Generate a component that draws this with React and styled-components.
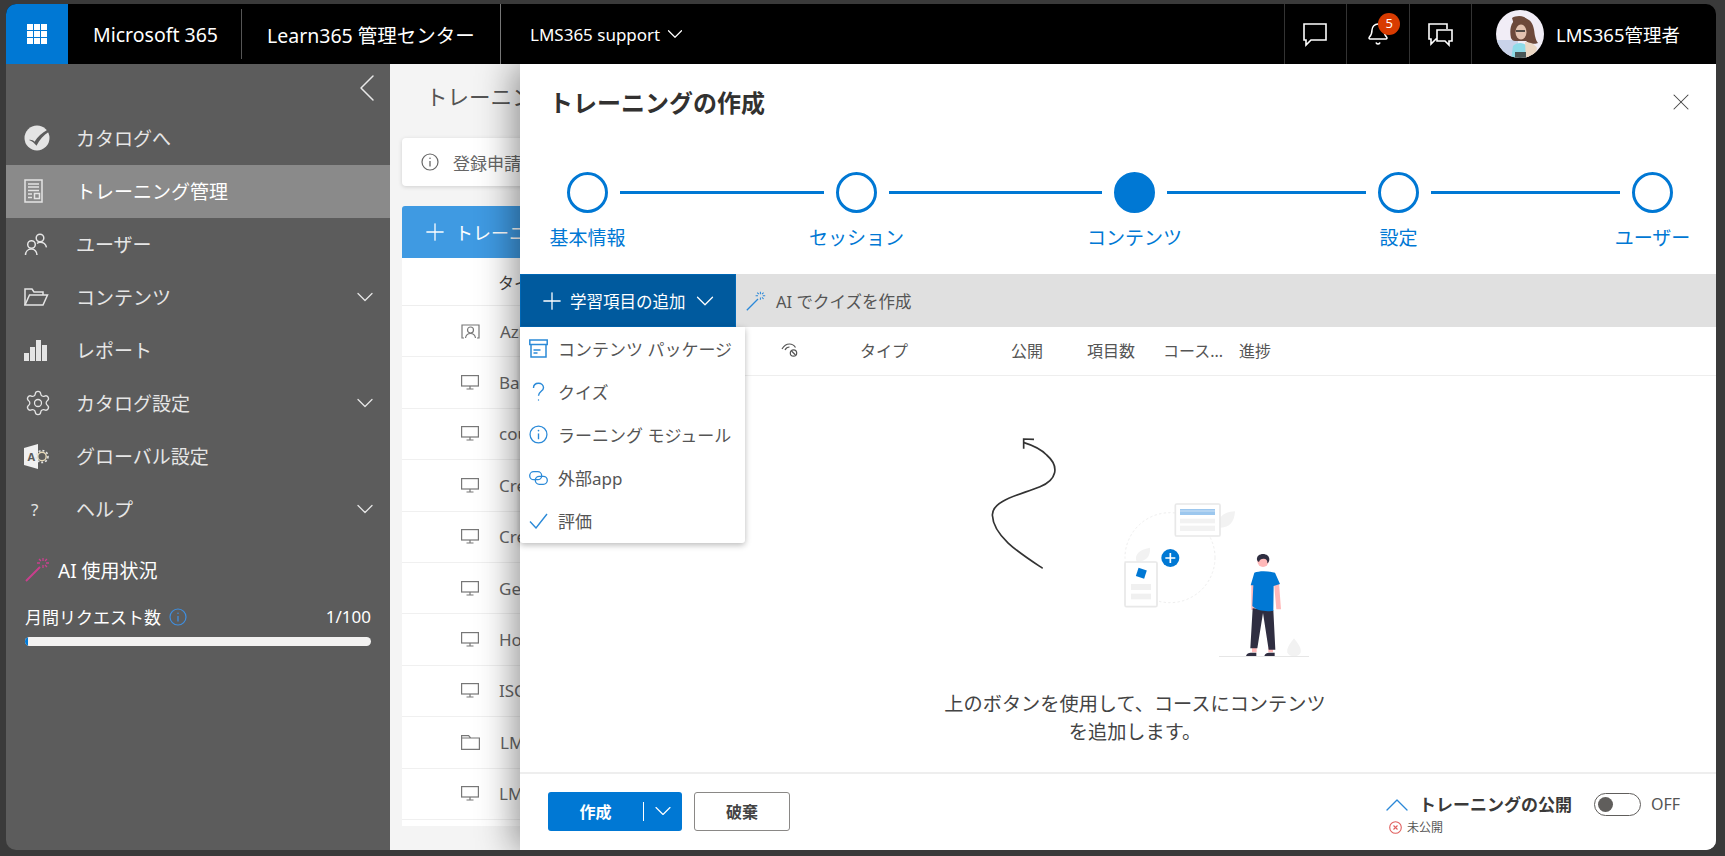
import React from 'react';
import styled, { createGlobalStyle } from 'styled-components';
import { ChevronDown, ChevronLeft, ChevronUp, Settings, Plus, X, Bell } from 'lucide-react';

const GlobalStyle = createGlobalStyle`
  html, body { margin: 0; height: 100%; background: #3a3a3a; overflow: hidden; }
  * { box-sizing: border-box; }
  body { font-family: "Noto Sans", "Noto Sans CJK JP", sans-serif; color: #444; }
`;

const S_Page = styled.div`
  height: 856px;
  padding: 4px 9px 6px 6px;
`;
const S_Window = styled.div`
  height: 100%;
  display: flex;
  flex-direction: column;
  border-radius: 10px;
  overflow: hidden;
`;

/* top bar */
const S_Header = styled.header`
  flex: 0 0 60px;
  display: flex;
  align-items: center;
  background: #000;
  color: #fff;
`;
const S_Waffle = styled.div`
  width: 62px;
  height: 100%;
  display: flex;
  align-items: center;
  justify-content: center;
  background: #0078d4;
`;
const S_HeaderText = styled.div`
  width: ${(p) => p.$w};
  height: 50px;
  display: flex;
  align-items: center;
  padding-left: 25px;
  font-size: 19.5px;
  border-right: 1px solid #555;
  white-space: nowrap;
`;
const S_Tenant = styled.div`
  height: 100%;
  display: flex;
  align-items: center;
  gap: 2px;
  padding-left: 29px;
  border-left: 1px solid #777;
  margin-left: -1px;
  font-size: 17px;
  white-space: nowrap;
`;
const S_Spacer = styled.div`
  flex: 1;
`;
const S_IconCell = styled.div`
  position: relative;
  width: 62.5px;
  height: 100%;
  display: flex;
  align-items: center;
  justify-content: center;
  border-left: 1px solid #333;
`;
const S_Badge = styled.span`
  position: absolute;
  top: 9px;
  left: 31px;
  width: 22px;
  height: 22px;
  border-radius: 50%;
  background: #d83b01;
  font-size: 13px;
  line-height: 21px;
  text-align: center;
`;
const S_User = styled.div`
  display: flex;
  align-items: center;
  gap: 12px;
  height: 100%;
  padding: 0 36px 0 24px;
  border-left: 1px solid #333;
  font-size: 18.5px;
  white-space: nowrap;
`;
const S_Avatar = styled.div`
  width: 48px;
  height: 48px;
  border-radius: 50%;
  overflow: hidden;
`;

/* sidebar */
const S_Body = styled.div`
  flex: 1;
  display: flex;
  min-height: 0;
`;
const S_Sidebar = styled.aside`
  flex: 0 0 384px;
  background: #5c5c5c;
  color: #e6e6e6;
`;
const S_Collapse = styled.div`
  height: 47.5px;
  display: flex;
  align-items: center;
  justify-content: flex-end;
  margin-right: -1px;
  color: #e8e8e8;
`;
const S_NavItem = styled.div`
  height: 53px;
  display: flex;
  align-items: center;
  padding: 0 11px 0 18px;
  font-size: 19px;
  background: ${(p) => (p.$active ? '#8a8a8a' : 'transparent')};
  color: ${(p) => (p.$active ? '#fff' : '#e6e6e6')};
`;
const S_NavIcon = styled.span`
  width: 52px;
  display: flex;
  align-items: center;
  color: #e4e4e4;
`;
const S_NavLabel = styled.span`
  flex: 1;
`;
const S_HelpMark = styled.span`
  padding-left: 7px;
  font-size: 17px;
`;
const S_Usage = styled.div`
  padding: 21px 19px 0 19px;
`;
const S_UsageTitle = styled.div`
  display: flex;
  align-items: center;
  gap: 8px;
  height: 26px;
  font-size: 19px;
  color: #fff;
`;
const S_UsageRow = styled.div`
  display: flex;
  align-items: center;
  gap: 8px;
  margin-top: 21px;
  height: 26px;
  font-size: 17px;
  color: #fff;
`;
const S_UsageCount = styled.span`
  margin-left: auto;
`;
const S_Bar = styled.div`
  height: 9px;
  margin-top: 7px;
  border-radius: 5px;
  background: #f3f2f1;
  overflow: hidden;
`;
const S_BarFill = styled.div`
  height: 100%;
  background: #0078d4;
`;

/* page behind the panel */
const S_Main = styled.main`
  position: relative;
  flex: 1;
  padding: 0 12px;
  background: #f4f4f4;
  overflow: hidden;
`;
const S_PageTitle = styled.h1`
  margin: 0;
  height: 74px;
  padding: 19px 0 0 24px;
  font-size: 21.5px;
  line-height: 28px;
  font-weight: 400;
  color: #555;
`;
const S_Notice = styled.div`
  height: 48px;
  display: flex;
  align-items: center;
  gap: 14px;
  padding-left: 19px;
  background: #fff;
  border-radius: 4px;
  box-shadow: 0 1px 4px rgba(0, 0, 0, 0.15);
  font-size: 17px;
  color: #666;
`;
const S_NewButton = styled.div`
  height: 52px;
  margin-top: 20px;
  display: flex;
  align-items: center;
  gap: 6px;
  padding-left: 19px;
  background: #3f9ae2;
  border-radius: 3px 3px 0 0;
  font-size: 18px;
  color: #fff;
`;
const S_BgTable = styled.div`
  height: 568px;
  background: #fff;
  overflow: hidden;
`;
const S_BgHead = styled.div`
  height: 48px;
  display: flex;
  align-items: center;
  padding-left: 96px;
  border-bottom: 1px solid #eee;
  font-size: 16px;
  color: #444;
`;
const S_BgRow = styled.div`
  height: 51.4px;
  display: flex;
  align-items: center;
  gap: 20px;
  padding-left: 59px;
  border-bottom: 1px solid #f0f0f0;
  font-size: 17px;
  color: #666;
`;

/* slide-in panel */
const S_Panel = styled.section`
  position: absolute;
  top: 0;
  right: 0;
  bottom: 0;
  width: 1196px;
  display: flex;
  flex-direction: column;
  background: #fff;
  box-shadow: -6px 0 34px rgba(0, 0, 0, 0.42);
`;
const S_PanelHead = styled.div`
  flex: 0 0 108px;
  display: flex;
  justify-content: space-between;
  align-items: flex-start;
  padding: 24px 21px 0 29px;
`;
const S_PanelTitle = styled.h2`
  margin: 0;
  font-size: 24px;
  line-height: 30px;
  font-weight: 700;
  color: #323130;
`;
const S_Stepper = styled.div`
  flex: 0 0 auto;
  display: grid;
  grid-template-columns: 41px 228px 41px 237px 41px 223px 41px 213px 41px;
  padding: 0 0 23px 47px;
`;
const S_Circle = styled.div`
  width: 41px;
  height: 41px;
  border-radius: 50%;
  border: 3px solid #0078d4;
  background: ${(p) => (p.$filled ? '#0078d4' : '#fff')};
`;
const S_Line = styled.div`
  height: 3px;
  align-self: center;
  margin: 0 12px;
  background: #0078d4;
`;
const S_StepLabel = styled.div`
  grid-row: 2;
  grid-column: ${(p) => p.$col};
  justify-self: center;
  margin-top: 12px;
  font-size: 19px;
  line-height: 26px;
  color: #0078d4;
  white-space: nowrap;
`;
const S_Toolbar = styled.div`
  position: relative;
  flex: 0 0 53px;
  display: flex;
  align-items: center;
  background: #e0e0e0;
`;
const S_AddButton = styled.div`
  width: 216px;
  height: 100%;
  display: flex;
  align-items: center;
  gap: 4px;
  padding-left: 17px;
  background: #005a9e;
  border: 1px solid #0067b5;
  font-size: 16.5px;
  color: #fff;
`;
const S_AiButton = styled.div`
  display: flex;
  align-items: center;
  gap: 10px;
  padding-left: 10px;
  font-size: 16.5px;
  color: #555;
`;
const S_Menu = styled.div`
  position: absolute;
  top: 100%;
  left: 0;
  z-index: 2;
  width: 225px;
  padding-bottom: 1px;
  background: #fff;
  border-radius: 0 0 3px 3px;
  box-shadow: 0 2px 6px rgba(0, 0, 0, 0.28);
`;
const S_MenuItem = styled.div`
  height: 43px;
  display: flex;
  align-items: center;
  gap: 10px;
  padding-left: 9px;
  font-size: 17px;
  color: #555;
  white-space: nowrap;
  svg { flex: 0 0 19px; color: #2b8ad8; }
`;
const S_ContentHead = styled.div`
  flex: 0 0 49px;
  display: grid;
  grid-template-columns: 79px 151px 76px 76px 76px auto;
  align-items: center;
  padding: 0 0 3px 261px;
  border-bottom: 1px solid #eee;
  font-size: 16px;
  color: #555;
`;
const S_Empty = styled.div`
  flex: 1;
  display: flex;
  flex-direction: column;
  align-items: center;
  padding: 44px 0 0 34px;
  min-height: 0;
`;
const S_EmptyText = styled.p`
  margin: 20px 0 0;
  width: 392px;
  font-size: 19.2px;
  line-height: 28px;
  text-align: center;
  color: #444;
`;
const S_Footer = styled.footer`
  flex: 0 0 78px;
  display: flex;
  align-items: center;
  gap: 12px;
  padding: 0 36px 2px 28px;
  border-top: 2px solid #eee;
`;
const S_PrimaryButton = styled.div`
  width: 134px;
  height: 39px;
  display: flex;
  align-items: center;
  background: #0078d4;
  border-radius: 3px;
  color: #fff;
  font-size: 16px;
  font-weight: 700;
`;
const S_PrimaryText = styled.span`
  width: 95px;
  text-align: center;
`;
const S_PrimarySplit = styled.span`
  flex: 1;
  height: 19px;
  display: flex;
  align-items: center;
  justify-content: center;
  border-left: 1px solid #fff;
`;
const S_GhostButton = styled.div`
  width: 96px;
  height: 39px;
  display: flex;
  align-items: center;
  justify-content: center;
  border: 1px solid #8a8886;
  border-radius: 3px;
  font-size: 16px;
  font-weight: 700;
  color: #444;
`;
const S_Publish = styled.div`
  margin-left: auto;
  display: flex;
  flex-direction: column;
  margin-top: 6px;
  gap: 3px;
`;
const S_PublishHead = styled.div`
  display: flex;
  align-items: center;
  gap: 12px;
  font-size: 17px;
  line-height: 24px;
  font-weight: 700;
  color: #3b3a39;
`;
const S_PublishChevron = styled.span`
  width: 20px;
  height: 24px;
  margin-left: 2px;
  display: flex;
  align-items: center;
  justify-content: center;
  color: #2b88d8;
  svg { flex: none; }
`;
const S_PublishState = styled.div`
  display: flex;
  align-items: center;
  gap: 5px;
  padding-left: 4px;
  font-size: 12px;
  line-height: 16px;
  color: #555;
`;
const S_ToggleWrap = styled.div`
  display: flex;
  align-items: center;
  gap: 10px;
  margin: -14px 0 0 10px;
  font-size: 16px;
  color: #555;
`;
const S_Toggle = styled.div`
  width: 47px;
  height: 23px;
  display: flex;
  align-items: center;
  padding-left: 3px;
  border: 1px solid #605e5c;
  border-radius: 12px;
`;
const S_Knob = styled.div`
  width: 15px;
  height: 15px;
  border-radius: 50%;
  background: #605e5c;
`;

const Waffle = () => (
  <svg width="20" height="20" viewBox="0 0 20 20" fill="#fff">
    {[0, 7, 14].flatMap((y) =>
      [0, 7, 14].map((x) => <rect key={`${x}-${y}`} x={x} y={y} width="6" height="6" />)
    )}
  </svg>
);
const Chat = () => (
  <svg width="26" height="25" viewBox="0 0 26 25" fill="none" stroke="#fff" strokeWidth="1.6">
    <path d="M2 2h22v16H9l-5 5v-5H2z" />
  </svg>
);
const ChatPair = () => (
  <svg width="27" height="25" viewBox="0 0 27 25" fill="none" stroke="#fff" strokeWidth="1.6">
    <path d="M20 7V2H2v15h2v5l5-5h1" />
    <path d="M10 8h15v11h-3v4l-4-4h-8z" />
  </svg>
);
const AvatarArt = () => (
  <svg width="48" height="48" viewBox="0 0 48 48">
    <defs>
      <filter id="soft"><feGaussianBlur stdDeviation="0.6" /></filter>
    </defs>
    <rect width="48" height="48" fill="#f1edf6" />
    <g filter="url(#soft)">
      <rect x="-2" y="30" width="24" height="20" fill="#c9d3ea" />
      <path d="M15 28c-2-9 0-20 11-20s12 10 13 18c1 4 2 6 3 7-6 2-10 0-12-2H19c-2 0-3-1-4-3z" fill="#6d4a3a" />
      <ellipse cx="25" cy="22" rx="5.5" ry="7.5" fill="#e3c2b0" />
      <path d="M16 8c5-3 14-3 17 4-5-1-12 0-14 6z" fill="#6d4a3a" />
      <path d="M17 36c4-4 10-4 14 0l2 14H15z" fill="#8edbe8" />
      <path d="M29 32c4 0 10 2 12 6l-3 12H30z" fill="#ecd8c4" />
      <rect x="19" y="42" width="11" height="7" fill="#4a5757" />
    </g>
    <path d="M20 21h9" stroke="#222" strokeWidth="1.4" />
  </svg>
);
const CatalogIcon = () => (
  <svg width="26" height="26" viewBox="0 0 26 26">
    <circle cx="13" cy="13" r="12.5" fill="#e4e4e4" />
    <path d="M5 15c2-.5 4 .2 5.5 1.8 3-5 7.500-9 13-12l1.500 2c-5.500 3.500-9.500 8-12.500 14-2-2.800-4.500-4.500-7.500-5.800z" fill="#5c5c5c" />
  </svg>
);
const TrainingIcon = () => (
  <svg width="19" height="24" viewBox="0 0 19 24" fill="none" stroke="#e4e4e4" strokeWidth="1.5">
    <rect x="1" y="1" width="17" height="22" />
    <path d="M4 5h11M4 8h11M4 11.5h11M4 15h4M4 18.5h4" />
    <rect x="10.5" y="14.5" width="5" height="5" />
  </svg>
);
const UsersIcon = () => (
  <svg width="24" height="24" viewBox="0 0 24 24" fill="none" stroke="#e4e4e4" strokeWidth="1.5">
    <circle cx="16" cy="6" r="3.8" />
    <circle cx="7.5" cy="12.5" r="3.8" />
    <path d="M1.5 23c0-3 2-6 6-6 3 0 5.500 2.500 5.500 6" />
    <path d="M13 11.5c1-.8 2-1.2 3-1.2 3.500 0 5.800 2 6.500 5" />
  </svg>
);
const FolderIcon = () => (
  <svg width="25" height="18" viewBox="0 0 25 18" fill="none" stroke="#e4e4e4" strokeWidth="1.5">
    <path d="M1 17V1h7l2 3h9v3" />
    <path d="M1 17h18l4.500-10H5.500z" />
  </svg>
);
const BarsIcon = () => (
  <svg width="24" height="21" viewBox="0 0 24 21" fill="#e4e4e4">
    <rect x="0" y="13" width="5" height="8" />
    <rect x="6" y="7" width="5" height="14" />
    <rect x="12" y="0" width="5" height="21" />
    <rect x="18" y="5" width="5" height="16" />
  </svg>
);
const GlobalIcon = () => (
  <svg width="25" height="25" viewBox="0 0 25 25">
    <path d="M0 4l14-4v25L0 21z" fill="#f0f0f0" />
    <text x="3.5" y="17" fontSize="11" fontWeight="700" fontFamily="Noto Sans, sans-serif" fill="#5c5c5c">A</text>
    <circle cx="18" cy="12.5" r="4.2" fill="none" stroke="#e6d9b8" strokeWidth="1.4" />
    <circle cx="18" cy="12.5" r="6" fill="none" stroke="#e4e4e4" strokeWidth="1.6" strokeDasharray="2 2" />
  </svg>
);
const Wand = ({ color, size = 25, weight = 2 }) => (
  <svg width={size} height={size} viewBox="0 0 25 25" fill="none" stroke={color}>
    <path d="M1 24L15 10" strokeWidth={weight} />
    <path d="M18 1v3M18 8v3M12 6h3M21 6h3M14 2l2 2M20 8l2 2M22 2l-2 2" strokeWidth="1.3" />
  </svg>
);
const Info = ({ size = 18, color }) => (
  <svg width={size} height={size} viewBox="0 0 18 18" fill="none" stroke={color}>
    <circle cx="9" cy="9" r="8" strokeWidth="1.2" />
    <path d="M9 8v5.5" strokeWidth="1.3" />
    <circle cx="9" cy="5.3" r="0.8" fill={color} stroke="none" />
  </svg>
);
const Monitor = () => (
  <svg width="18" height="15" viewBox="0 0 18 15" fill="none" stroke="#777" strokeWidth="1.2">
    <rect x="0.6" y="0.6" width="16.8" height="10.4" />
    <path d="M9 11v3M5.5 14h7" />
  </svg>
);
const Presenter = () => (
  <svg width="19" height="15" viewBox="0 0 19 15" fill="none" stroke="#777" strokeWidth="1.2">
    <path d="M3 14H1V1h17v13h-2" />
    <circle cx="9.5" cy="6" r="3" />
    <path d="M4.5 14c.5-3 2.500-4.500 5-4.500s4.500 1.500 5 4.500" />
  </svg>
);
const Folder = () => (
  <svg width="19" height="15" viewBox="0 0 19 15" fill="none" stroke="#777" strokeWidth="1.2">
    <path d="M.6.6h7l2 2.400h8.800v11.400H.6zM.6 3h9" />
  </svg>
);
const PackageIcon = () => (
  <svg width="19" height="19" viewBox="0 0 19 19" fill="none" stroke="currentColor" strokeWidth="1.5">
    <rect x="0.8" y="1" width="17.4" height="4.5" />
    <path d="M2 5.5V18h15V5.5M4.5 11h7M4.500 14h4" />
  </svg>
);
const HelpIcon = () => (
  <svg width="19" height="20" viewBox="0 0 19 20" fill="none" stroke="currentColor" strokeWidth="1.4">
    <path d="M4.5 6c0-3 2.200-4.800 5-4.800s5 1.800 5 4.500c0 3.500-5 3.800-5 8" />
    <circle cx="9.5" cy="18" r="0.7" fill="currentColor" stroke="none" />
  </svg>
);
const LinkIcon = () => (
  <svg width="19" height="14" viewBox="0 0 19 14" fill="none" stroke="currentColor" strokeWidth="1.3">
    <rect x="0.7" y="0.7" width="12" height="8" rx="4" />
    <rect x="6.3" y="5.3" width="12" height="8" rx="4" />
  </svg>
);
const CheckIcon = () => (
  <svg width="19" height="16" viewBox="0 0 19 16" fill="none" stroke="currentColor" strokeWidth="1.4">
    <path d="M1 8.5l6 6.500L18 1" />
  </svg>
);
const NoEye = () => (
  <svg width="18" height="16" viewBox="0 0 18 16" fill="none" stroke="#555" strokeWidth="1.2">
    <path d="M1 7c2-3.500 5-5 7.500-5s4.500 1.200 6 3.500M4 8c1-2 3-3 4.500-3" />
    <circle cx="12.5" cy="11" r="3.2" />
    <path d="M10.5 9l4 4" />
  </svg>
);
const ErrorDot = () => (
  <svg width="13" height="13" viewBox="0 0 13 13" fill="none" stroke="#e0605f" strokeWidth="1.1">
    <circle cx="6.5" cy="6.5" r="5.8" />
    <path d="M4.5 4.500l4 4M8.500 4.500l-4 4" />
  </svg>
);
const Illustration = () => (
  <svg width="370" height="250" viewBox="-30 0 1110 750">
    <path d="M248 445C180 400 100 350 97 285C97 240 180 225 240 200C290 180 300 140 260 105C240 85 215 75 192 68" fill="none" stroke="#333" strokeWidth="5" />
    <path d="M191 86V57L222 58" fill="none" stroke="#333" strokeWidth="5" />
    <circle cx="630" cy="413" r="135" fill="none" stroke="#eee" strokeWidth="3" strokeDasharray="7 7" />
    <path d="M780 323c-8-30 6-46 45-49-2 34-18 50-45 49z" fill="#f2f2f2" />
    <path d="M530 425c-8-20 6-36 40-42 2 26-12 42-40 42z" fill="#f2f2f2" />
    <rect x="646" y="252" width="134" height="96" rx="4" fill="#fff" stroke="#e8e8e8" strokeWidth="5" />
    <rect x="660" y="267" width="105" height="18" fill="#9cc7ee" />
    <path d="M660 273h105" stroke="#e6f0fa" strokeWidth="2" />
    <rect x="660" y="296" width="105" height="14" fill="#f2f2f2" />
    <rect x="660" y="317" width="105" height="16" fill="#f2f2f2" />
    <rect x="495" y="426" width="96" height="134" rx="4" fill="#fff" stroke="#e8e8e8" strokeWidth="5" />
    <rect x="531" y="447" width="26" height="26" transform="rotate(18 544 460)" fill="#0078d4" />
    <rect x="513" y="492" width="60" height="18" fill="#f0f0f0" />
    <rect x="513" y="521" width="60" height="17" fill="#f0f0f0" />
    <circle cx="631" cy="414" r="27" fill="#0078d4" />
    <path d="M631 399v30M616 414h30" stroke="#fff" strokeWidth="5" />
    <path d="M1002 655c-16 20-22 32-20 42 2 8 10 12 20 12s18-4 20-12c2-10-4-22-20-42z" fill="#f2f2f2" />
    <rect x="777" y="708" width="270" height="3" fill="#e6e6e6" />
    <path d="M874 490h14l-2 80h-12zM942 490h15l6 78h-14z" fill="#ffb8b8" />
    <path d="M876 683h14v14h-14zM925 683h14v14h-14z" fill="#ffb8b8" />
    <path d="M878 565l62 6 6 118h-20l-17-110-17 106h-21z" fill="#2f2e41" />
    <path d="M858 708c2-8 8-10 14-10h17v10zM913 708c2-8 8-10 14-10h17v10z" fill="#2f2e41" />
    <circle cx="909" cy="424" r="17" fill="#ffb8b8" />
    <path d="M891 420c-2-12 8-18 18-18s20 6 19 18c-1 5-4 9-6 10 1-8-3-14-11-14-8 1-12 2-14 10-3-1-5-3-6-6z" fill="#2f2e41" />
    <path d="M883 458c14-6 40-6 62 0l15 34-19 6-1 74c-22 4-50 0-63-14l3-62-8 0z" fill="#0078d4" />
  </svg>
);

const NAV = [
  { label: 'カタログへ', icon: <CatalogIcon /> },
  { label: 'トレーニング管理', icon: <TrainingIcon />, active: true },
  { label: 'ユーザー', icon: <UsersIcon /> },
  { label: 'コンテンツ', icon: <FolderIcon />, more: true },
  { label: 'レポート', icon: <BarsIcon /> },
  { label: 'カタログ設定', icon: <Settings size={28} strokeWidth={1.1} />, more: true },
  { label: 'グローバル設定', icon: <GlobalIcon /> },
  { label: 'ヘルプ', icon: <S_HelpMark>?</S_HelpMark>, more: true },
];
const ROWS = [
  ['Azu', Presenter],
  ['Bar', Monitor],
  ['cou', Monitor],
  ['Cre', Monitor],
  ['Cre', Monitor],
  ['Ge', Monitor],
  ['Ho', Monitor],
  ['ISC', Monitor],
  ['LM', Folder],
  ['LM', Monitor],
];
const STEPS = ['基本情報', 'セッション', 'コンテンツ', '設定', 'ユーザー'];

export default function App() {
  return (
    <S_Page>
      <GlobalStyle />
      <S_Window>
        <S_Header>
          <S_Waffle><Waffle /></S_Waffle>
          <S_HeaderText $w="174px">Microsoft 365</S_HeaderText>
          <S_HeaderText $w="259px">Learn365 管理センター</S_HeaderText>
          <S_Tenant>
            LMS365 support
            <ChevronDown size={26} strokeWidth={1.1} />
          </S_Tenant>
          <S_Spacer />
          <S_IconCell><Chat /></S_IconCell>
          <S_IconCell>
            <Bell size={24} strokeWidth={1.5} />
            <S_Badge>5</S_Badge>
          </S_IconCell>
          <S_IconCell><ChatPair /></S_IconCell>
          <S_User>
            <S_Avatar><AvatarArt /></S_Avatar>
            LMS365管理者
          </S_User>
        </S_Header>
        <S_Body>
          <S_Sidebar>
            <S_Collapse><ChevronLeft size={48} strokeWidth={0.75} /></S_Collapse>
            {NAV.map((item) => (
              <S_NavItem key={item.label} $active={item.active}>
                <S_NavIcon>{item.icon}</S_NavIcon>
                <S_NavLabel>{item.label}</S_NavLabel>
                {item.more && <ChevronDown size={28} strokeWidth={1.1} />}
              </S_NavItem>
            ))}
            <S_Usage>
              <S_UsageTitle>
                <Wand color="#c93f8d" />
                AI 使用状況
              </S_UsageTitle>
              <S_UsageRow>
                月間リクエスト数
                <Info color="#3f8fe0" />
                <S_UsageCount>1/100</S_UsageCount>
              </S_UsageRow>
              <S_Bar><S_BarFill style={{ width: '1%' }} /></S_Bar>
            </S_Usage>
          </S_Sidebar>
          <S_Main>
            <S_PageTitle>トレーニン</S_PageTitle>
            <S_Notice>
              <Info color="#666" />
              登録申請
            </S_Notice>
            <S_NewButton>
              <Plus size={28} strokeWidth={1.1} />
              トレーニ
            </S_NewButton>
            <S_BgTable>
              <S_BgHead>タイ</S_BgHead>
              {ROWS.map(([name, Icon], i) => (
                <S_BgRow key={i}>
                  <Icon />
                  {name}
                </S_BgRow>
              ))}
            </S_BgTable>
            <S_Panel>
              <S_PanelHead>
                <S_PanelTitle>トレーニングの作成</S_PanelTitle>
                <X size={28} strokeWidth={0.9} color="#444" />
              </S_PanelHead>
              <S_Stepper>
                <S_Circle />
                <S_Line />
                <S_Circle />
                <S_Line />
                <S_Circle $filled />
                <S_Line />
                <S_Circle />
                <S_Line />
                <S_Circle />
                {STEPS.map((step, i) => (
                  <S_StepLabel key={step} $col={i * 2 + 1}>{step}</S_StepLabel>
                ))}
              </S_Stepper>
              <S_Toolbar>
                <S_AddButton>
                  <Plus size={28} strokeWidth={1.1} />
                  学習項目の追加
                  <ChevronDown size={30} strokeWidth={1} />
                </S_AddButton>
                <S_AiButton>
                  <Wand color="#2b88d8" size={20} weight={1.6} />
                  AI でクイズを作成
                </S_AiButton>
                <S_Menu>
                  <S_MenuItem><PackageIcon />コンテンツ パッケージ</S_MenuItem>
                  <S_MenuItem><HelpIcon />クイズ</S_MenuItem>
                  <S_MenuItem><Info size={19} color="#2b8ad8" />ラーニング モジュール</S_MenuItem>
                  <S_MenuItem><LinkIcon />外部app</S_MenuItem>
                  <S_MenuItem><CheckIcon />評価</S_MenuItem>
                </S_Menu>
              </S_Toolbar>
              <S_ContentHead>
                <NoEye />
                <span>タイプ</span>
                <span>公開</span>
                <span>項目数</span>
                <span>コース...</span>
                <span>進捗</span>
              </S_ContentHead>
              <S_Empty>
                <Illustration />
                <S_EmptyText>上のボタンを使用して、コースにコンテンツを追加します。</S_EmptyText>
              </S_Empty>
              <S_Footer>
                <S_PrimaryButton>
                  <S_PrimaryText>作成</S_PrimaryText>
                  <S_PrimarySplit><ChevronDown size={28} strokeWidth={1} /></S_PrimarySplit>
                </S_PrimaryButton>
                <S_GhostButton>破棄</S_GhostButton>
                <S_Publish>
                  <S_PublishHead>
                    <S_PublishChevron><ChevronUp size={40} strokeWidth={0.8} /></S_PublishChevron>
                    トレーニングの公開
                  </S_PublishHead>
                  <S_PublishState>
                    <ErrorDot />
                    未公開
                  </S_PublishState>
                </S_Publish>
                <S_ToggleWrap>
                  <S_Toggle><S_Knob /></S_Toggle>
                  OFF
                </S_ToggleWrap>
              </S_Footer>
            </S_Panel>
          </S_Main>
        </S_Body>
      </S_Window>
    </S_Page>
  );
}
